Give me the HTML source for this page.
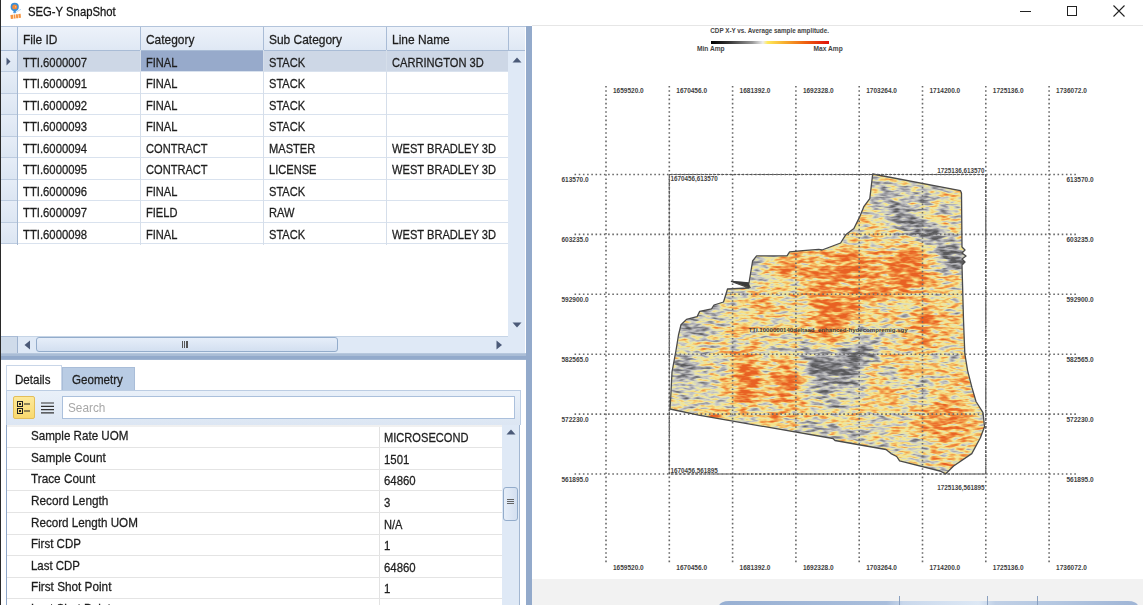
<!DOCTYPE html>
<html><head><meta charset="utf-8">
<style>
*{margin:0;padding:0;box-sizing:border-box}
html,body{width:1143px;height:605px;overflow:hidden;background:#fff;font-family:"Liberation Sans",sans-serif;color:#1e1e1e}
.a{position:absolute}
.t{position:absolute;white-space:nowrap;font-size:11.3px;line-height:14px;transform:scaleY(1.13);transform-origin:0 50%;-webkit-text-stroke:0.25px #1e1e1e}
#grid .row{position:absolute;left:18px;width:490px;height:22px;border-bottom:1px solid #d9e2ee}
#grid .rh{position:absolute;left:1px;width:17px;height:22px;background:linear-gradient(#e9eff8,#dae4f1);border-bottom:1px solid #b9c9dd;border-right:1px solid #a3b7d1}
.vl{position:absolute;width:1px;background:#d5deea}
</style></head><body>
<!-- left dark edge -->
<div class="a" style="left:0;top:0;width:1px;height:605px;background:#2a2a2a"></div>

<!-- title bar -->
<svg class="a" style="left:0;top:0" width="26" height="22" viewBox="0 0 26 22">
  <circle cx="14.7" cy="6.9" r="4.1" fill="#3a8fd8"/>
  <circle cx="14.7" cy="6.9" r="2.5" fill="#f28a3a"/>
  <path d="M15 6.2 L16.3 6.9 L15 7.6Z" fill="#fde0c0"/>
  <path d="M12.4 9.5 L14.7 13.6 L17 9.5Z" fill="#3a8fd8"/>
  <path d="M13.2 12.6 L16.2 12.6" stroke="#5aa0e0" stroke-width="1"/>
  <path d="M16.5 11.8 L21 9.3" stroke="#a9cdef" stroke-width="0.8"/>
  <g fill="#f59440" transform="rotate(-6 15.6 16.3)">
    <rect x="10.6" y="14.4" width="2.6" height="4" />
    <rect x="13.8" y="14.4" width="1.6" height="4" />
    <rect x="16" y="14.4" width="2" height="4" />
    <rect x="18.5" y="14.4" width="2.3" height="4" />
  </g>
</svg>
<div class="t" style="left:28px;top:4px;font-size:11.3px;color:#111">SEG-Y SnapShot</div>
<!-- window controls -->
<div class="a" style="left:1020px;top:11px;width:11px;height:1px;background:#222"></div>
<div class="a" style="left:1067px;top:6px;width:10px;height:10px;border:1px solid #222"></div>
<svg class="a" style="left:1113px;top:5px" width="12" height="12" viewBox="0 0 12 12"><path d="M0.5 0.5L11.5 11.5M11.5 0.5L0.5 11.5" stroke="#222" stroke-width="1.1"/></svg>
<div class="a" style="left:532px;top:25px;width:611px;height:1px;background:#e6e6e6"></div>

<!-- TOP GRID -->
<div id="grid">
  <div class="a" style="left:1px;top:26px;width:525px;height:1px;background:#b3c4db"></div>
  <!-- header -->
  <div class="a" style="left:1px;top:27px;width:524px;height:23px;background:linear-gradient(#edf2fa,#dfe8f4)"></div>
  <div class="a" style="left:1px;top:50px;width:524px;height:1px;background:#a9bcd6"></div>
  <div class="a" style="left:17px;top:27px;width:1px;height:23px;background:#a9bcd6"></div>
  <div class="a" style="left:140px;top:27px;width:1px;height:23px;background:#a9bcd6"></div>
  <div class="a" style="left:263px;top:27px;width:1px;height:23px;background:#a9bcd6"></div>
  <div class="a" style="left:386px;top:27px;width:1px;height:23px;background:#a9bcd6"></div>
  <div class="a" style="left:508px;top:27px;width:1px;height:23px;background:#a9bcd6"></div>
  <div class="t" style="left:23px;top:32px;font-size:11.95px">File ID</div>
  <div class="t" style="left:146px;top:32px;font-size:11.95px">Category</div>
  <div class="t" style="left:269px;top:32px;font-size:11.95px">Sub Category</div>
  <div class="t" style="left:392px;top:32px;font-size:11.95px">Line Name</div>

  <!-- selected row -->
  <div class="a" style="left:18px;top:51px;width:490px;height:21px;background:#cdd7e6"></div>
  <div class="a" style="left:141px;top:51px;width:122px;height:21px;background:#97aacb"></div>
  <!-- rows -->
  <div class="a" style="left:1px;top:50.8px;width:16px;height:21.5px;background:linear-gradient(#e6edf7,#dbe5f2)"></div>
<div class="a" style="left:1px;top:71.3px;width:16px;height:1px;background:#bccbdf"></div>
<div class="a" style="left:18px;top:71.3px;width:490px;height:1px;background:#d9e2ee"></div>
<div class="t" style="left:23px;top:54.8px;font-size:11.31px">TTI.6000007</div>
<div class="t" style="left:146px;top:54.8px;font-size:11.10px">FINAL</div>
<div class="t" style="left:269px;top:54.8px;font-size:11.10px">STACK</div>
<div class="t" style="left:392px;top:54.8px;font-size:11.12px">CARRINGTON 3D</div>
<div class="a" style="left:1px;top:72.3px;width:16px;height:21.5px;background:linear-gradient(#e6edf7,#dbe5f2)"></div>
<div class="a" style="left:1px;top:92.8px;width:16px;height:1px;background:#bccbdf"></div>
<div class="a" style="left:18px;top:92.8px;width:490px;height:1px;background:#d9e2ee"></div>
<div class="t" style="left:23px;top:76.3px;font-size:11.31px">TTI.6000091</div>
<div class="t" style="left:146px;top:76.3px;font-size:11.10px">FINAL</div>
<div class="t" style="left:269px;top:76.3px;font-size:11.10px">STACK</div>
<div class="a" style="left:1px;top:93.8px;width:16px;height:21.5px;background:linear-gradient(#e6edf7,#dbe5f2)"></div>
<div class="a" style="left:1px;top:114.3px;width:16px;height:1px;background:#bccbdf"></div>
<div class="a" style="left:18px;top:114.3px;width:490px;height:1px;background:#d9e2ee"></div>
<div class="t" style="left:23px;top:97.8px;font-size:11.31px">TTI.6000092</div>
<div class="t" style="left:146px;top:97.8px;font-size:11.10px">FINAL</div>
<div class="t" style="left:269px;top:97.8px;font-size:11.10px">STACK</div>
<div class="a" style="left:1px;top:115.3px;width:16px;height:21.5px;background:linear-gradient(#e6edf7,#dbe5f2)"></div>
<div class="a" style="left:1px;top:135.8px;width:16px;height:1px;background:#bccbdf"></div>
<div class="a" style="left:18px;top:135.8px;width:490px;height:1px;background:#d9e2ee"></div>
<div class="t" style="left:23px;top:119.3px;font-size:11.31px">TTI.6000093</div>
<div class="t" style="left:146px;top:119.3px;font-size:11.10px">FINAL</div>
<div class="t" style="left:269px;top:119.3px;font-size:11.10px">STACK</div>
<div class="a" style="left:1px;top:136.8px;width:16px;height:21.5px;background:linear-gradient(#e6edf7,#dbe5f2)"></div>
<div class="a" style="left:1px;top:157.3px;width:16px;height:1px;background:#bccbdf"></div>
<div class="a" style="left:18px;top:157.3px;width:490px;height:1px;background:#d9e2ee"></div>
<div class="t" style="left:23px;top:140.8px;font-size:11.31px">TTI.6000094</div>
<div class="t" style="left:146px;top:140.8px;font-size:11.10px">CONTRACT</div>
<div class="t" style="left:269px;top:140.8px;font-size:11.10px">MASTER</div>
<div class="t" style="left:392px;top:140.8px;font-size:11.12px">WEST BRADLEY 3D</div>
<div class="a" style="left:1px;top:158.3px;width:16px;height:21.5px;background:linear-gradient(#e6edf7,#dbe5f2)"></div>
<div class="a" style="left:1px;top:178.8px;width:16px;height:1px;background:#bccbdf"></div>
<div class="a" style="left:18px;top:178.8px;width:490px;height:1px;background:#d9e2ee"></div>
<div class="t" style="left:23px;top:162.3px;font-size:11.31px">TTI.6000095</div>
<div class="t" style="left:146px;top:162.3px;font-size:11.10px">CONTRACT</div>
<div class="t" style="left:269px;top:162.3px;font-size:11.10px">LICENSE</div>
<div class="t" style="left:392px;top:162.3px;font-size:11.12px">WEST BRADLEY 3D</div>
<div class="a" style="left:1px;top:179.8px;width:16px;height:21.5px;background:linear-gradient(#e6edf7,#dbe5f2)"></div>
<div class="a" style="left:1px;top:200.3px;width:16px;height:1px;background:#bccbdf"></div>
<div class="a" style="left:18px;top:200.3px;width:490px;height:1px;background:#d9e2ee"></div>
<div class="t" style="left:23px;top:183.8px;font-size:11.31px">TTI.6000096</div>
<div class="t" style="left:146px;top:183.8px;font-size:11.10px">FINAL</div>
<div class="t" style="left:269px;top:183.8px;font-size:11.10px">STACK</div>
<div class="a" style="left:1px;top:201.3px;width:16px;height:21.5px;background:linear-gradient(#e6edf7,#dbe5f2)"></div>
<div class="a" style="left:1px;top:221.8px;width:16px;height:1px;background:#bccbdf"></div>
<div class="a" style="left:18px;top:221.8px;width:490px;height:1px;background:#d9e2ee"></div>
<div class="t" style="left:23px;top:205.3px;font-size:11.31px">TTI.6000097</div>
<div class="t" style="left:146px;top:205.3px;font-size:11.10px">FIELD</div>
<div class="t" style="left:269px;top:205.3px;font-size:11.10px">RAW</div>
<div class="a" style="left:1px;top:222.8px;width:16px;height:21.5px;background:linear-gradient(#e6edf7,#dbe5f2)"></div>
<div class="a" style="left:1px;top:243.3px;width:16px;height:1px;background:#bccbdf"></div>
<div class="a" style="left:18px;top:243.3px;width:490px;height:1px;background:#d9e2ee"></div>
<div class="t" style="left:23px;top:226.8px;font-size:11.31px">TTI.6000098</div>
<div class="t" style="left:146px;top:226.8px;font-size:11.10px">FINAL</div>
<div class="t" style="left:269px;top:226.8px;font-size:11.10px">STACK</div>
<div class="t" style="left:392px;top:226.8px;font-size:11.12px">WEST BRADLEY 3D</div>
<div class="a" style="left:17px;top:50px;width:1px;height:194.5px;background:#a3b7d1"></div>
<div class="a" style="left:140px;top:50px;width:1px;height:194.5px;background:#d5deea"></div>
<div class="a" style="left:263px;top:50px;width:1px;height:194.5px;background:#d5deea"></div>
<div class="a" style="left:386px;top:50px;width:1px;height:194.5px;background:#d5deea"></div>
<svg class="a" style="left:6px;top:57px" width="5" height="9"><path d="M0.5 0.5L4.5 4.5L0.5 8.5Z" fill="#4b5a78"/></svg>
  <!-- body white area for rows is default -->

  <!-- vertical scrollbar -->
  <div class="a" style="left:508px;top:51px;width:17px;height:285px;background:#dfe9f6"></div>
  <svg class="a" style="left:512px;top:57px" width="10" height="6"><path d="M0.5 5.5L5 0.5L9.5 5.5Z" fill="#4b5a78"/></svg>
  <svg class="a" style="left:512px;top:322px" width="10" height="6"><path d="M0.5 0.5L5 5.5L9.5 0.5Z" fill="#4b5a78"/></svg>
  <!-- horizontal scrollbar -->
  <div class="a" style="left:1px;top:336px;width:524px;height:17px;background:#dfe9f6"></div>
  <div class="a" style="left:1px;top:336px;width:17px;height:17px;background:#cfdbea;border-right:1px solid #9fb3cf;border-top:1px solid #a9bcd6"></div>
  <div class="a" style="left:18px;top:336px;width:490px;height:1px;background:#c5d4e6"></div>
  <svg class="a" style="left:24px;top:340px" width="7" height="10"><path d="M6 0.5L0.5 5L6 9.5Z" fill="#4b5a78"/></svg>
  <div class="a" style="left:36px;top:337px;width:302px;height:15px;border:1px solid #93accb;border-radius:3px;background:linear-gradient(#e6eef9,#d3dff0)"></div>
  <div class="a" style="left:182px;top:341px;width:6px;height:7px;border-left:1px solid #555;border-right:1px solid #555;background:linear-gradient(90deg,transparent 1px,#555 1px,#555 2px,transparent 2px,transparent 3px,#555 3px,#555 4px,transparent 4px)"></div>
  <svg class="a" style="left:496px;top:340px" width="7" height="10"><path d="M0.5 0.5L6 5L0.5 9.5Z" fill="#4b5a78"/></svg>
</div>

<!-- splitters -->
<div class="a" style="left:1px;top:353px;width:526px;height:7px;background:linear-gradient(#c3d1e3 0,#aabdd6 1px,#aabdd6 3px,#93aacb 3.5px,#93aacb 6px,#a9bcd5 7px)"></div>
<div class="a" style="left:525.5px;top:26px;width:6px;height:579px;background:#93aacb"></div>

<!-- BOTTOM PANEL -->
<div id="bottom">
  <!-- tabs -->
  <div class="a" style="left:6px;top:365px;width:56px;height:26px;background:#fff;border:1px solid #c9d6e8;border-bottom:none"></div>
  <div class="t" style="left:15px;top:372px;font-size:11.6px">Details</div>
  <div class="a" style="left:62px;top:367px;width:73px;height:23px;background:#b9cce4;border:1px solid #a9bdd8;border-bottom:none"></div>
  <div class="t" style="left:72px;top:372px;font-size:11.6px">Geometry</div>
  <!-- toolbar -->
  <div class="a" style="left:6px;top:390px;width:515px;height:35px;background:linear-gradient(#e9f0f9,#dce6f3);border:1px solid #bccde3;border-bottom:none"></div>
  <div class="a" style="left:13px;top:396px;width:22px;height:23px;background:linear-gradient(#fde99a,#f9d96e);border:1px solid #e3be5a;border-radius:2px"></div>
  <svg class="a" style="left:17px;top:401px" width="14" height="13" viewBox="0 0 14 13">
    <rect x="0.5" y="0.5" width="5" height="5" fill="none" stroke="#222" stroke-width="1"/>
    <rect x="0.5" y="7.5" width="5" height="5" fill="none" stroke="#222" stroke-width="1"/>
    <rect x="2" y="2" width="2" height="2" fill="#222"/><rect x="2" y="9" width="2" height="2" fill="#222"/>
    <path d="M7 3H13M7 10H13" stroke="#222" stroke-width="1.2"/>
  </svg>
  <svg class="a" style="left:41px;top:402px" width="13" height="12" viewBox="0 0 13 12">
    <path d="M0 1H13M0 4.3H13M0 7.6H13M0 10.9H13" stroke="#333" stroke-width="1.2"/>
  </svg>
  <div class="a" style="left:62px;top:396px;width:453px;height:23px;background:#fff;border:1px solid #abc0dc"></div>
  <div class="t" style="left:68px;top:400px;color:#a8a8a8;font-size:11.8px;-webkit-text-stroke:0">Search</div>

  <!-- property grid -->
  <div class="a" style="left:7px;top:425px;width:495px;height:180px;background:#fff"></div>
  <div class="a" style="left:6px;top:425px;width:1px;height:180px;background:#8ea6c8"></div>
  <div class="a" style="left:379px;top:425px;width:1px;height:180px;background:#e2e2e2"></div>
  <div class="a" style="left:7px;top:447.3px;width:495px;height:1px;background:#e4e4e4"></div>
<div class="t" style="left:31px;top:428.2px;font-size:11.62px">Sample Rate UOM</div>
<div class="t" style="left:384px;top:430.2px;font-size:11.10px">MICROSECOND</div>
<div class="a" style="left:7px;top:468.9px;width:495px;height:1px;background:#e4e4e4"></div>
<div class="t" style="left:31px;top:449.8px;font-size:11.80px">Sample Count</div>
<div class="t" style="left:384px;top:451.8px;font-size:11.40px">1501</div>
<div class="a" style="left:7px;top:490.4px;width:495px;height:1px;background:#e4e4e4"></div>
<div class="t" style="left:31px;top:471.4px;font-size:11.78px">Trace Count</div>
<div class="t" style="left:384px;top:473.4px;font-size:11.40px">64860</div>
<div class="a" style="left:7px;top:511.9px;width:495px;height:1px;background:#e4e4e4"></div>
<div class="t" style="left:31px;top:492.9px;font-size:11.81px">Record Length</div>
<div class="t" style="left:384px;top:494.9px;font-size:11.40px">3</div>
<div class="a" style="left:7px;top:533.5px;width:495px;height:1px;background:#e4e4e4"></div>
<div class="t" style="left:31px;top:514.5px;font-size:11.67px">Record Length UOM</div>
<div class="t" style="left:384px;top:516.5px;font-size:11.10px">N/A</div>
<div class="a" style="left:7px;top:555.0px;width:495px;height:1px;background:#e4e4e4"></div>
<div class="t" style="left:31px;top:536.0px;font-size:11.52px">First CDP</div>
<div class="t" style="left:384px;top:538.0px;font-size:11.40px">1</div>
<div class="a" style="left:7px;top:576.6px;width:495px;height:1px;background:#e4e4e4"></div>
<div class="t" style="left:31px;top:557.5px;font-size:11.46px">Last CDP</div>
<div class="t" style="left:384px;top:559.5px;font-size:11.40px">64860</div>
<div class="a" style="left:7px;top:598.1px;width:495px;height:1px;background:#e4e4e4"></div>
<div class="t" style="left:31px;top:579.1px;font-size:11.77px">First Shot Point</div>
<div class="t" style="left:384px;top:581.1px;font-size:11.40px">1</div>
<div class="a" style="left:7px;top:619.7px;width:495px;height:1px;background:#e4e4e4"></div>
<div class="t" style="left:31px;top:600.6px;font-size:11.75px">Last Shot Point</div>
<div class="a" style="left:7px;top:425px;width:495px;height:2px;background:#f0f0f0"></div>
  <!-- scrollbar -->
  <div class="a" style="left:502px;top:425px;width:18px;height:180px;background:#dfe9f6"></div>
  <div class="a" style="left:519px;top:425px;width:1px;height:180px;background:#a3b7d1"></div>
  <svg class="a" style="left:506px;top:429px" width="10" height="6"><path d="M0.5 5.5L5 0.5L9.5 5.5Z" fill="#4b5a78"/></svg>
  <div class="a" style="left:503px;top:487px;width:15px;height:34px;border:1px solid #93accb;border-radius:3px;background:linear-gradient(90deg,#e6eef9,#d3dff0)"></div>
  <svg class="a" style="left:507px;top:499px" width="7" height="6"><path d="M0 0.5H7M0 2.5H7M0 4.5H7" stroke="#555" stroke-width="0.9"/></svg>
</div>

<!-- MAP -->
<div class="a" style="left:532px;top:26px;width:611px;height:553px;background:#fff"></div>
<div class="a" style="left:532px;top:579px;width:611px;height:26px;background:#f2f2f2"></div>
<svg class="a" style="left:0;top:0" width="1143" height="605" viewBox="0 0 1143 605">
<defs>
<clipPath id="pc"><polygon points="872.7,174.0 960.4,190.6 961.5,193.0 962.0,247.0 965.0,250.0 962.0,253.0 966.0,256.0 962.0,259.0 965.0,262.0 962.0,265.0 963.5,320.0 964.8,353.7 967.6,370.6 971.9,387.4 976.0,401.5 983.0,412.7 984.5,426.7 980.4,437.7 971.8,453.6 953.6,466.0 945.8,473.8 940.0,471.0 899.6,460.8 896.7,456.5 891.0,453.6 886.0,449.5 835.0,440.5 833.0,438.5 698.6,415.2 670.0,409.0 670.6,400.0 672.0,372.0 675.9,351.0 678.5,335.0 681.0,324.7 686.5,319.4 697.0,316.7 699.7,311.4 711.6,308.8 714.0,305.0 723.5,302.0 726.0,294.0 727.5,289.0 749.0,288.0 731.4,281.5 749.0,283.0 752.6,261.0 756.6,255.9 787.0,255.9 789.6,251.9 802.9,250.6 818.7,249.3 822.0,250.0 840.6,243.0 846.0,234.4 853.9,228.5 859.8,216.6 863.8,206.7 869.8,198.7"/></clipPath>
<filter id="bl" x="-50%" y="-50%" width="200%" height="200%"><feGaussianBlur stdDeviation="7"/></filter>
<filter id="cm" x="0" y="0" width="100%" height="100%" color-interpolation-filters="sRGB">
 <feTurbulence type="fractalNoise" baseFrequency="0.03 0.08" numOctaves="2" seed="3" result="n1"/>
 <feColorMatrix in="n1" type="matrix" values="1 0 0 0 0  1 0 0 0 0  1 0 0 0 0  0 0 0 0 1" result="n1r"/>
 <feTurbulence type="fractalNoise" baseFrequency="0.1 0.33" numOctaves="2" seed="7" result="n2"/>
 <feColorMatrix in="n2" type="matrix" values="1 0 0 0 0  1 0 0 0 0  1 0 0 0 0  0 0 0 0 1" result="n2r"/>
 <feComposite in="SourceGraphic" in2="n1r" operator="arithmetic" k1="0" k2="1" k3="0.5" k4="-0.25" result="s1"/>
 <feComposite in="s1" in2="n2r" operator="arithmetic" k1="0" k2="1" k3="1.1" k4="-0.55" result="sum"/>
 <feComponentTransfer in="sum">
  <feFuncR type="table" tableValues="0.353 0.431 0.518 0.612 0.714 0.804 0.902 0.961 0.961 0.953 0.941 0.925 0.910"/>
  <feFuncG type="table" tableValues="0.353 0.431 0.518 0.612 0.714 0.804 0.894 0.902 0.784 0.659 0.549 0.455 0.384"/>
  <feFuncB type="table" tableValues="0.361 0.447 0.533 0.635 0.729 0.776 0.690 0.565 0.439 0.333 0.251 0.188 0.141"/>
 </feComponentTransfer>
</filter>
</defs>
<g clip-path="url(#pc)"><g filter="url(#cm)">
<rect x="660" y="170" width="330" height="310" fill="rgb(145,145,145)"/>
<g filter="url(#bl)">
<ellipse cx="912" cy="190" rx="45" ry="12" fill="rgb(102,102,102)" transform="rotate(8 912 190)"/>
<ellipse cx="882" cy="202" rx="14" ry="10" fill="rgb(63,63,63)" transform="rotate(30 882 202)"/>
<ellipse cx="905" cy="220" rx="26" ry="11" fill="rgb(38,38,38)" transform="rotate(38 905 220)"/>
<ellipse cx="935" cy="242" rx="28" ry="12" fill="rgb(30,30,30)" transform="rotate(38 935 242)"/>
<ellipse cx="957" cy="258" rx="12" ry="12" fill="rgb(25,25,25)" transform="rotate(20 957 258)"/>
<ellipse cx="950" cy="212" rx="12" ry="16" fill="rgb(127,127,127)" transform="rotate(0 950 212)"/>
<ellipse cx="958" cy="285" rx="8" ry="14" fill="rgb(114,114,114)" transform="rotate(0 958 285)"/>
<ellipse cx="930" cy="200" rx="14" ry="8" fill="rgb(96,96,96)" transform="rotate(0 930 200)"/>
<ellipse cx="875" cy="190" rx="8" ry="12" fill="rgb(102,102,102)" transform="rotate(0 875 190)"/>
<ellipse cx="865" cy="282" rx="60" ry="26" fill="rgb(198,198,198)" transform="rotate(-5 865 282)"/>
<ellipse cx="912" cy="268" rx="16" ry="24" fill="rgb(234,234,234)" transform="rotate(0 912 268)"/>
<ellipse cx="840" cy="268" rx="22" ry="12" fill="rgb(219,219,219)" transform="rotate(0 840 268)"/>
<ellipse cx="828" cy="318" rx="18" ry="22" fill="rgb(229,229,229)" transform="rotate(0 828 318)"/>
<ellipse cx="795" cy="268" rx="22" ry="10" fill="rgb(204,204,204)" transform="rotate(0 795 268)"/>
<ellipse cx="925" cy="322" rx="10" ry="26" fill="rgb(219,219,219)" transform="rotate(0 925 322)"/>
<ellipse cx="765" cy="305" rx="10" ry="10" fill="rgb(204,204,204)" transform="rotate(0 765 305)"/>
<ellipse cx="760" cy="266" rx="12" ry="10" fill="rgb(96,96,96)" transform="rotate(0 760 266)"/>
<ellipse cx="735" cy="296" rx="12" ry="7" fill="rgb(102,102,102)" transform="rotate(0 735 296)"/>
<ellipse cx="712" cy="314" rx="18" ry="8" fill="rgb(81,81,81)" transform="rotate(0 712 314)"/>
<ellipse cx="690" cy="330" rx="16" ry="14" fill="rgb(76,76,76)" transform="rotate(0 690 330)"/>
<ellipse cx="684" cy="370" rx="14" ry="24" fill="rgb(66,66,66)" transform="rotate(0 684 370)"/>
<ellipse cx="682" cy="398" rx="14" ry="10" fill="rgb(71,71,71)" transform="rotate(0 682 398)"/>
<ellipse cx="830" cy="370" rx="34" ry="13" fill="rgb(35,35,35)" transform="rotate(30 830 370)"/>
<ellipse cx="852" cy="356" rx="18" ry="10" fill="rgb(51,51,51)" transform="rotate(20 852 356)"/>
<ellipse cx="820" cy="388" rx="20" ry="8" fill="rgb(71,71,71)" transform="rotate(0 820 388)"/>
<ellipse cx="890" cy="370" rx="9" ry="8" fill="rgb(56,56,56)" transform="rotate(0 890 370)"/>
<ellipse cx="870" cy="346" rx="16" ry="8" fill="rgb(45,45,45)" transform="rotate(20 870 346)"/>
<ellipse cx="889" cy="370" rx="7" ry="7" fill="rgb(45,45,45)" transform="rotate(0 889 370)"/>
<ellipse cx="808" cy="342" rx="10" ry="7" fill="rgb(76,76,76)" transform="rotate(0 808 342)"/>
<ellipse cx="773" cy="360" rx="8" ry="12" fill="rgb(102,102,102)" transform="rotate(0 773 360)"/>
<ellipse cx="705" cy="395" rx="14" ry="10" fill="rgb(114,114,114)" transform="rotate(0 705 395)"/>
<ellipse cx="747" cy="382" rx="11" ry="30" fill="rgb(239,239,239)" transform="rotate(0 747 382)"/>
<ellipse cx="786" cy="388" rx="12" ry="26" fill="rgb(229,229,229)" transform="rotate(0 786 388)"/>
<ellipse cx="948" cy="422" rx="22" ry="18" fill="rgb(224,224,224)" transform="rotate(0 948 422)"/>
<ellipse cx="905" cy="365" rx="10" ry="7" fill="rgb(204,204,204)" transform="rotate(0 905 365)"/>
<ellipse cx="812" cy="425" rx="30" ry="10" fill="rgb(102,102,102)" transform="rotate(0 812 425)"/>
<ellipse cx="862" cy="434" rx="30" ry="8" fill="rgb(107,107,107)" transform="rotate(0 862 434)"/>
<ellipse cx="830" cy="402" rx="18" ry="8" fill="rgb(91,91,91)" transform="rotate(0 830 402)"/>
</g></g></g>
<line x1="606.0" y1="86" x2="606.0" y2="563" stroke="#6a6a6a" stroke-width="1.6" stroke-dasharray="1.6 2.6"/>
<line x1="669.3" y1="86" x2="669.3" y2="563" stroke="#6a6a6a" stroke-width="1.6" stroke-dasharray="1.6 2.6"/>
<line x1="732.6" y1="86" x2="732.6" y2="563" stroke="#6a6a6a" stroke-width="1.6" stroke-dasharray="1.6 2.6"/>
<line x1="795.9" y1="86" x2="795.9" y2="563" stroke="#6a6a6a" stroke-width="1.6" stroke-dasharray="1.6 2.6"/>
<line x1="859.2" y1="86" x2="859.2" y2="563" stroke="#6a6a6a" stroke-width="1.6" stroke-dasharray="1.6 2.6"/>
<line x1="922.5" y1="86" x2="922.5" y2="563" stroke="#6a6a6a" stroke-width="1.6" stroke-dasharray="1.6 2.6"/>
<line x1="985.8" y1="86" x2="985.8" y2="563" stroke="#6a6a6a" stroke-width="1.6" stroke-dasharray="1.6 2.6"/>
<line x1="1049.1" y1="86" x2="1049.1" y2="563" stroke="#6a6a6a" stroke-width="1.6" stroke-dasharray="1.6 2.6"/>
<line x1="574.5" y1="174.5" x2="1077.5" y2="174.5" stroke="#6a6a6a" stroke-width="1.6" stroke-dasharray="1.6 2.6"/>
<line x1="574.5" y1="234.4" x2="1077.5" y2="234.4" stroke="#6a6a6a" stroke-width="1.6" stroke-dasharray="1.6 2.6"/>
<line x1="574.5" y1="294.3" x2="1077.5" y2="294.3" stroke="#6a6a6a" stroke-width="1.6" stroke-dasharray="1.6 2.6"/>
<line x1="574.5" y1="354.2" x2="1077.5" y2="354.2" stroke="#6a6a6a" stroke-width="1.6" stroke-dasharray="1.6 2.6"/>
<line x1="574.5" y1="414.1" x2="1077.5" y2="414.1" stroke="#6a6a6a" stroke-width="1.6" stroke-dasharray="1.6 2.6"/>
<line x1="574.5" y1="474.0" x2="1077.5" y2="474.0" stroke="#6a6a6a" stroke-width="1.6" stroke-dasharray="1.6 2.6"/>
<polygon points="872.7,174.0 960.4,190.6 961.5,193.0 962.0,247.0 965.0,250.0 962.0,253.0 966.0,256.0 962.0,259.0 965.0,262.0 962.0,265.0 963.5,320.0 964.8,353.7 967.6,370.6 971.9,387.4 976.0,401.5 983.0,412.7 984.5,426.7 980.4,437.7 971.8,453.6 953.6,466.0 945.8,473.8 940.0,471.0 899.6,460.8 896.7,456.5 891.0,453.6 886.0,449.5 835.0,440.5 833.0,438.5 698.6,415.2 670.0,409.0 670.6,400.0 672.0,372.0 675.9,351.0 678.5,335.0 681.0,324.7 686.5,319.4 697.0,316.7 699.7,311.4 711.6,308.8 714.0,305.0 723.5,302.0 726.0,294.0 727.5,289.0 749.0,288.0 731.4,281.5 749.0,283.0 752.6,261.0 756.6,255.9 787.0,255.9 789.6,251.9 802.9,250.6 818.7,249.3 822.0,250.0 840.6,243.0 846.0,234.4 853.9,228.5 859.8,216.6 863.8,206.7 869.8,198.7" fill="none" stroke="#4a4a4a" stroke-width="1.3" stroke-linejoin="round"/>
<polygon points="731.4,281.2 750.5,288 748.5,283" fill="#3a3a3a" stroke="#3a3a3a" stroke-width="0.5"/>
<rect x="669.3" y="174.5" width="316.5" height="299.5" fill="none" stroke="#555" stroke-width="1.2" stroke-dasharray="3 1"/>
</svg>
<div style="position:absolute;white-space:nowrap;font-family:'Liberation Sans',sans-serif;font-weight:bold;color:#555;left:613.0px;top:87.5px;font-size:6.5px;line-height:6.5px;color:#3e3e3e">1659520.0</div>
<div style="position:absolute;white-space:nowrap;font-family:'Liberation Sans',sans-serif;font-weight:bold;color:#555;left:613.0px;top:565.0px;font-size:6.5px;line-height:6.5px;color:#3e3e3e">1659520.0</div>
<div style="position:absolute;white-space:nowrap;font-family:'Liberation Sans',sans-serif;font-weight:bold;color:#555;left:676.3px;top:87.5px;font-size:6.5px;line-height:6.5px;color:#3e3e3e">1670456.0</div>
<div style="position:absolute;white-space:nowrap;font-family:'Liberation Sans',sans-serif;font-weight:bold;color:#555;left:676.3px;top:565.0px;font-size:6.5px;line-height:6.5px;color:#3e3e3e">1670456.0</div>
<div style="position:absolute;white-space:nowrap;font-family:'Liberation Sans',sans-serif;font-weight:bold;color:#555;left:739.6px;top:87.5px;font-size:6.5px;line-height:6.5px;color:#3e3e3e">1681392.0</div>
<div style="position:absolute;white-space:nowrap;font-family:'Liberation Sans',sans-serif;font-weight:bold;color:#555;left:739.6px;top:565.0px;font-size:6.5px;line-height:6.5px;color:#3e3e3e">1681392.0</div>
<div style="position:absolute;white-space:nowrap;font-family:'Liberation Sans',sans-serif;font-weight:bold;color:#555;left:802.9px;top:87.5px;font-size:6.5px;line-height:6.5px;color:#3e3e3e">1692328.0</div>
<div style="position:absolute;white-space:nowrap;font-family:'Liberation Sans',sans-serif;font-weight:bold;color:#555;left:802.9px;top:565.0px;font-size:6.5px;line-height:6.5px;color:#3e3e3e">1692328.0</div>
<div style="position:absolute;white-space:nowrap;font-family:'Liberation Sans',sans-serif;font-weight:bold;color:#555;left:866.2px;top:87.5px;font-size:6.5px;line-height:6.5px;color:#3e3e3e">1703264.0</div>
<div style="position:absolute;white-space:nowrap;font-family:'Liberation Sans',sans-serif;font-weight:bold;color:#555;left:866.2px;top:565.0px;font-size:6.5px;line-height:6.5px;color:#3e3e3e">1703264.0</div>
<div style="position:absolute;white-space:nowrap;font-family:'Liberation Sans',sans-serif;font-weight:bold;color:#555;left:929.5px;top:87.5px;font-size:6.5px;line-height:6.5px;color:#3e3e3e">1714200.0</div>
<div style="position:absolute;white-space:nowrap;font-family:'Liberation Sans',sans-serif;font-weight:bold;color:#555;left:929.5px;top:565.0px;font-size:6.5px;line-height:6.5px;color:#3e3e3e">1714200.0</div>
<div style="position:absolute;white-space:nowrap;font-family:'Liberation Sans',sans-serif;font-weight:bold;color:#555;left:992.8px;top:87.5px;font-size:6.5px;line-height:6.5px;color:#3e3e3e">1725136.0</div>
<div style="position:absolute;white-space:nowrap;font-family:'Liberation Sans',sans-serif;font-weight:bold;color:#555;left:992.8px;top:565.0px;font-size:6.5px;line-height:6.5px;color:#3e3e3e">1725136.0</div>
<div style="position:absolute;white-space:nowrap;font-family:'Liberation Sans',sans-serif;font-weight:bold;color:#555;left:1056.1px;top:87.5px;font-size:6.5px;line-height:6.5px;color:#3e3e3e">1736072.0</div>
<div style="position:absolute;white-space:nowrap;font-family:'Liberation Sans',sans-serif;font-weight:bold;color:#555;left:1056.1px;top:565.0px;font-size:6.5px;line-height:6.5px;color:#3e3e3e">1736072.0</div>
<div style="position:absolute;white-space:nowrap;font-family:'Liberation Sans',sans-serif;font-weight:bold;color:#555;left:561.5px;top:177.0px;font-size:6.5px;line-height:6.5px;color:#3e3e3e">613570.0</div>
<div style="position:absolute;white-space:nowrap;font-family:'Liberation Sans',sans-serif;font-weight:bold;color:#555;left:1066.5px;top:177.0px;font-size:6.5px;line-height:6.5px;color:#3e3e3e">613570.0</div>
<div style="position:absolute;white-space:nowrap;font-family:'Liberation Sans',sans-serif;font-weight:bold;color:#555;left:561.5px;top:236.9px;font-size:6.5px;line-height:6.5px;color:#3e3e3e">603235.0</div>
<div style="position:absolute;white-space:nowrap;font-family:'Liberation Sans',sans-serif;font-weight:bold;color:#555;left:1066.5px;top:236.9px;font-size:6.5px;line-height:6.5px;color:#3e3e3e">603235.0</div>
<div style="position:absolute;white-space:nowrap;font-family:'Liberation Sans',sans-serif;font-weight:bold;color:#555;left:561.5px;top:296.8px;font-size:6.5px;line-height:6.5px;color:#3e3e3e">592900.0</div>
<div style="position:absolute;white-space:nowrap;font-family:'Liberation Sans',sans-serif;font-weight:bold;color:#555;left:1066.5px;top:296.8px;font-size:6.5px;line-height:6.5px;color:#3e3e3e">592900.0</div>
<div style="position:absolute;white-space:nowrap;font-family:'Liberation Sans',sans-serif;font-weight:bold;color:#555;left:561.5px;top:356.7px;font-size:6.5px;line-height:6.5px;color:#3e3e3e">582565.0</div>
<div style="position:absolute;white-space:nowrap;font-family:'Liberation Sans',sans-serif;font-weight:bold;color:#555;left:1066.5px;top:356.7px;font-size:6.5px;line-height:6.5px;color:#3e3e3e">582565.0</div>
<div style="position:absolute;white-space:nowrap;font-family:'Liberation Sans',sans-serif;font-weight:bold;color:#555;left:561.5px;top:416.6px;font-size:6.5px;line-height:6.5px;color:#3e3e3e">572230.0</div>
<div style="position:absolute;white-space:nowrap;font-family:'Liberation Sans',sans-serif;font-weight:bold;color:#555;left:1066.5px;top:416.6px;font-size:6.5px;line-height:6.5px;color:#3e3e3e">572230.0</div>
<div style="position:absolute;white-space:nowrap;font-family:'Liberation Sans',sans-serif;font-weight:bold;color:#555;left:561.5px;top:476.5px;font-size:6.5px;line-height:6.5px;color:#3e3e3e">561895.0</div>
<div style="position:absolute;white-space:nowrap;font-family:'Liberation Sans',sans-serif;font-weight:bold;color:#555;left:1066.5px;top:476.5px;font-size:6.5px;line-height:6.5px;color:#3e3e3e">561895.0</div>
<div style="position:absolute;white-space:nowrap;font-family:'Liberation Sans',sans-serif;font-weight:bold;color:#555;left:670.5px;top:175.5px;font-size:6.3px;line-height:6.3px;color:#444">1670456,613570</div>
<div style="position:absolute;white-space:nowrap;font-family:'Liberation Sans',sans-serif;font-weight:bold;color:#555;left:937.2px;top:168.0px;font-size:6.3px;line-height:6.3px;color:#444">1725136,613570</div>
<div style="position:absolute;white-space:nowrap;font-family:'Liberation Sans',sans-serif;font-weight:bold;color:#555;left:670.5px;top:467.5px;font-size:6.3px;line-height:6.3px;color:#444">1670456,561895</div>
<div style="position:absolute;white-space:nowrap;font-family:'Liberation Sans',sans-serif;font-weight:bold;color:#555;left:937.2px;top:485.0px;font-size:6.3px;line-height:6.3px;color:#444">1725136,561895</div>
<div style="position:absolute;white-space:nowrap;font-family:'Liberation Sans',sans-serif;font-weight:bold;color:#555;left:748.5px;top:327.0px;font-size:6.1px;line-height:6.1px;color:#3a3a3a">TTI.1000000140deltaad_enhanced-hydecompremig.sgy</div>
<div style="position:absolute;white-space:nowrap;font-family:'Liberation Sans',sans-serif;font-weight:bold;color:#555;left:710.3px;top:27.5px;font-size:6.3px;line-height:6.3px;color:#444">CDP X-Y vs. Average sample amplitude.</div>
<div style="position:absolute;left:710.5px;top:41px;width:118px;height:3px;background:linear-gradient(90deg,#000 0%,#333 15%,#999 35%,#eee 44%,#ffe95a 48%,#f7b030 62%,#ee6010 80%,#e0100a 100%)"></div>
<div style="position:absolute;white-space:nowrap;font-family:'Liberation Sans',sans-serif;font-weight:bold;color:#555;left:697.0px;top:45.5px;font-size:6.6px;line-height:6.6px;color:#444">Min Amp</div>
<div style="position:absolute;white-space:nowrap;font-family:'Liberation Sans',sans-serif;font-weight:bold;color:#555;left:813.6px;top:45.5px;font-size:6.6px;line-height:6.6px;color:#444">Max Amp</div>
<div class="a" style="left:719px;top:600.5px;width:419px;height:5px;border-radius:10px 10px 0 0/5px 5px 0 0;background:linear-gradient(90deg,#98b0d3 0%,#a9bedc 40%,#c9d8ec 44%,#dde8f5 62%,#c0d0e6 66%,#b4c7e1 80%,#9fb5d6 100%)"></div>
<div class="a" style="left:899px;top:596px;width:1px;height:9px;background:#8aa0bf"></div>
<div class="a" style="left:987px;top:596px;width:1px;height:9px;background:#8aa0bf"></div>
<div class="a" style="left:1037px;top:596px;width:1px;height:9px;background:#8aa0bf"></div>

</body></html>
